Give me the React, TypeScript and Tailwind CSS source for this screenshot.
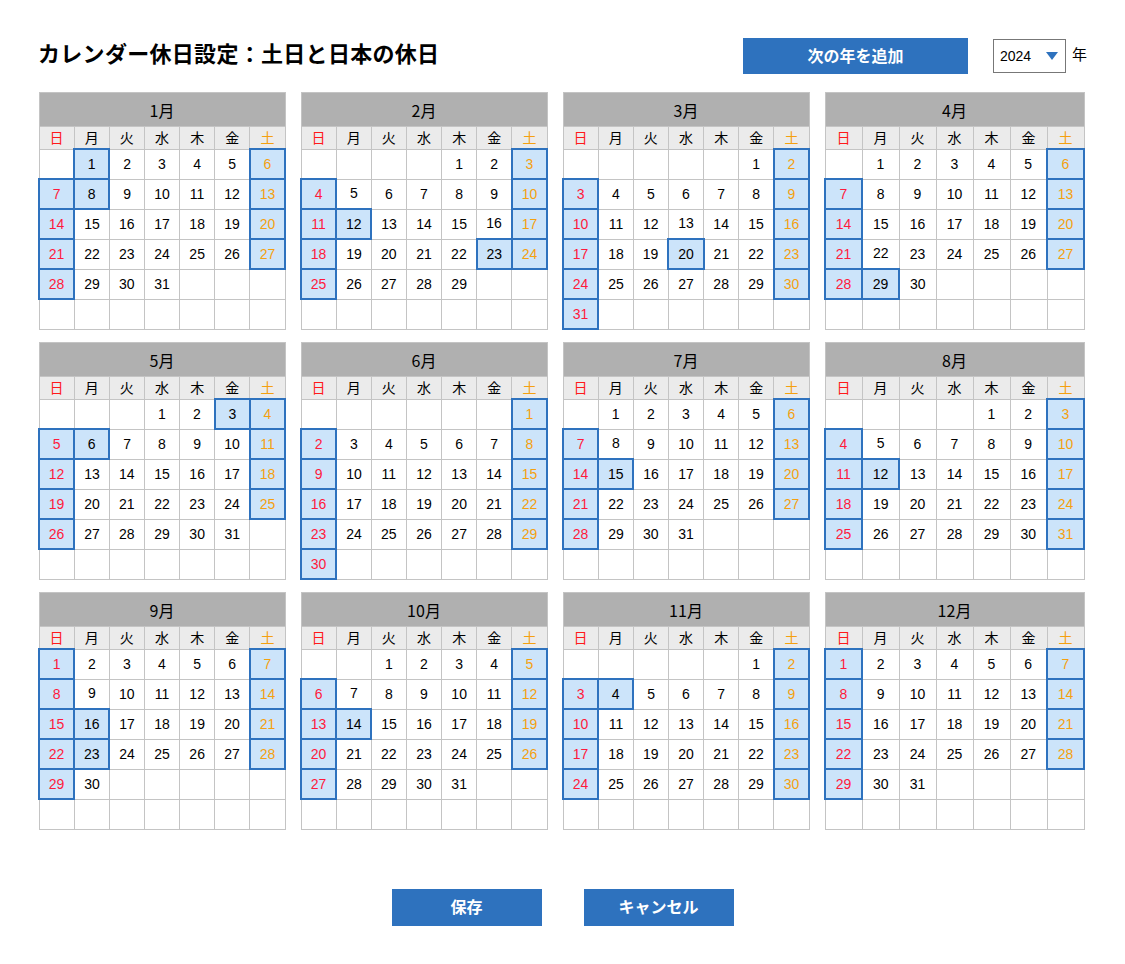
import React from "react";

const YEAR = 2024;
const WEEK = ["日", "月", "火", "水", "木", "金", "土"];

// 2024年の祝日 (月-日)
const HOLIDAYS = new Set([
  "1-1", "1-8", "2-11", "2-12", "2-23", "3-20", "4-29",
  "5-3", "5-4", "5-5", "5-6", "7-15", "8-11", "8-12",
  "9-16", "9-22", "9-23", "10-14", "11-3", "11-4", "11-23",
]);

const WIDTHS = ["w-[248px]", "w-[248px]", "w-[248px]", "w-[261px]"];

function buildWeeks(month: number) {
  const first = new Date(YEAR, month - 1, 1).getDay();
  const days = new Date(YEAR, month, 0).getDate();
  const cells: (number | null)[] = [];
  for (let i = 0; i < first; i++) cells.push(null);
  for (let d = 1; d <= days; d++) cells.push(d);
  while (cells.length < 42) cells.push(null);
  const weeks: (number | null)[][] = [];
  for (let i = 0; i < 6; i++) weeks.push(cells.slice(i * 7, i * 7 + 7));
  return weeks;
}

function MonthTable({ month, width }: { month: number; width: string }) {
  const weeks = buildWeeks(month);
  return (
    <table className={`${width} table-fixed border-collapse self-start`}>
      <thead>
        <tr>
          <th
            colSpan={7}
            className="h-[34px] border border-[#c4c4c4] bg-[#b0b0b0] text-[16px] font-normal text-black"
          >
            {month}月
          </th>
        </tr>
        <tr>
          {WEEK.map((w, i) => (
            <th
              key={w}
              className={`h-[22px] border border-[#c4c4c4] bg-[#ebebeb] text-[14px] font-normal ${
                i === 0 ? "text-[#ff1a1a]" : i === 6 ? "text-[#f5a00f]" : "text-black"
              }`}
            >
              {w}
            </th>
          ))}
        </tr>
      </thead>
      <tbody>
        {weeks.map((week, wi) => (
          <tr key={wi}>
            {week.map((d, i) => {
              const off =
                d !== null && (i === 0 || i === 6 || HOLIDAYS.has(`${month}-${d}`));
              const color =
                i === 0 ? "text-[#ff1a3c]" : i === 6 ? "text-[#f5a00f]" : "text-black";
              return (
                <td
                  key={i}
                  className={`h-[30px] p-0 text-center text-[14px] font-['Liberation_Sans',sans-serif] ${color} ${
                    off
                      ? "border-2 border-[#2e72be] bg-[#cce4fa]"
                      : "border border-[#c4c4c4] bg-white"
                  }`}
                >
                  {d ?? ""}
                </td>
              );
            })}
          </tr>
        ))}
      </tbody>
    </table>
  );
}

export default function App() {
  return (
    <div className="min-h-[964px] w-[1125px] bg-white font-['Noto_Sans_CJK_JP','Noto_Sans',sans-serif] text-black">
      <div className="px-[38px] pt-[38px]">
        <div className="flex h-[36px] items-center">
          <h1 className="pb-[8px] text-[22px] font-bold tracking-[0.3px]">
            カレンダー休日設定：土日と日本の休日
          </h1>
          <button className="ml-auto flex h-[36px] w-[225px] items-center justify-center bg-[#2e72be] pb-[3px] text-[16px] font-bold text-white">
            次の年を追加
          </button>
          <div className="ml-[25px] flex h-[34px] w-[73px] items-center justify-between border border-[#777] px-[6px]">
            <span className="font-['Liberation_Sans',sans-serif] text-[14px]">2024</span>
            <svg width="14" height="10" viewBox="0 0 14 10">
              <path d="M1 1 L13 1 L7 9 Z" fill="#2e72be" />
            </svg>
          </div>
          <span className="ml-[6px] pb-[3px] text-[15px]">年</span>
        </div>

        <div className="mt-[18px] grid grid-cols-[248px_248px_248px_261px] gap-x-[14px] gap-y-[12px]">
          {Array.from({ length: 12 }, (_, i) => (
            <MonthTable key={i} month={i + 1} width={WIDTHS[i % 4]} />
          ))}
        </div>

        <div className="mt-[59px] flex justify-center gap-[42px]">
          <button className="h-[37px] w-[150px] bg-[#2e72be] pb-[3px] text-[16px] font-bold text-white">
            保存
          </button>
          <button className="h-[37px] w-[150px] bg-[#2e72be] pb-[3px] text-[16px] font-bold text-white">
            キャンセル
          </button>
        </div>
      </div>
    </div>
  );
}
